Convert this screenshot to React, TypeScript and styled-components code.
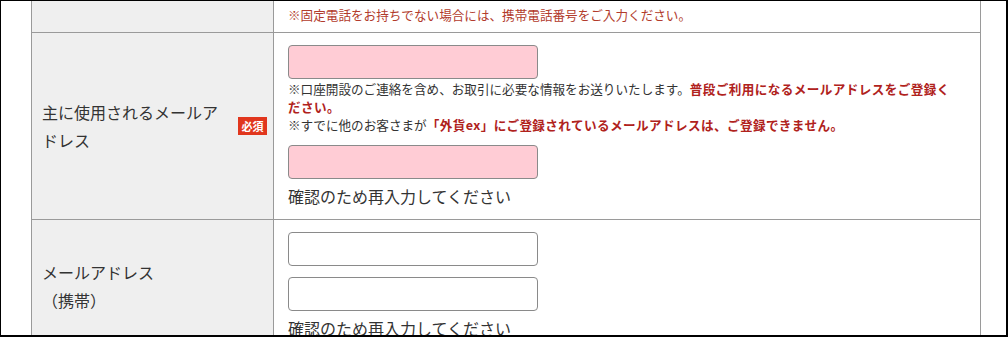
import React from 'react';
import styled, { createGlobalStyle } from 'styled-components';

const GlobalStyle = createGlobalStyle`
  html, body {
    margin: 0;
    padding: 0;
    background: #fff;
  }
  body {
    font-family: "Noto Sans CJK JP", "Noto Sans", sans-serif;
    color: #333;
  }
`;

const Frame = styled.div`
  width: 1008px;
  height: 337px;
  box-sizing: border-box;
  border-style: solid;
  border-color: #000;
  border-width: 1px 2px 2px 1px;
  padding-left: 30px;
  overflow: hidden;
  background: #fff;
`;

const Table = styled.div`
  width: 950px;
  box-sizing: border-box;
  border-left: 1px solid #9a9a9a;
  border-right: 1px solid #9a9a9a;
`;

const Row = styled.div`
  display: grid;
  grid-template-columns: 242px 1fr;
  border-bottom: 1px solid #9a9a9a;
`;

const Label = styled.div`
  display: flex;
  align-items: center;
  gap: 8px;
  box-sizing: border-box;
  padding: 0 6px 0 10px;
  background: #efefef;
  border-right: 1px solid #9a9a9a;
  font-size: 16px;
  line-height: 28px;
  color: #333;
`;

const LabelText = styled.div`
  flex: 1;
  min-width: 0;
`;

const Required = styled.span`
  flex: none;
  width: 29px;
  height: 18px;
  display: flex;
  align-items: center;
  justify-content: center;
  background: #e1361d;
  color: #fff;
  font-size: 11px;
  font-weight: 700;
  line-height: 1;
`;

const Value = styled.div<{ $pad?: string }>`
  display: flex;
  flex-direction: column;
  align-items: flex-start;
  box-sizing: border-box;
  padding: ${(p) => p.$pad || '12px 26px 12px 14px'};
`;

const Field = styled.input<{ $required?: boolean; $gap?: number }>`
  width: 250px;
  height: 34px;
  box-sizing: border-box;
  margin: ${(p) => p.$gap || 0}px 0 0;
  border: 1px solid #8a8a8a;
  border-radius: 4px;
  background: ${(p) => (p.$required ? '#ffccd5' : '#fff')};
  outline: none;
`;

const Note = styled.p<{ $tone?: 'red' | 'plain' }>`
  margin: 1px 0 0;
  font-size: 12.6px;
  line-height: 18px;
  color: ${(p) => (p.$tone === 'red' ? '#b23b2c' : '#333')};
`;

const Strong = styled.strong`
  color: #b0221c;
  font-weight: 700;
  letter-spacing: 0.4px;
`;

const Confirm = styled.div`
  margin-top: 6px;
  font-size: 16px;
  line-height: 22px;
  color: #333;
`;

export default function App() {
  return (
    <>
      <GlobalStyle />
      <Frame>
        <Table>
          <Row>
            <Label />
            <Value $pad="5px 26px 8px 14px">
              <Note $tone="red" style={{ margin: 0 }}>
                ※固定電話をお持ちでない場合には、携帯電話番号をご入力ください。
              </Note>
            </Value>
          </Row>
          <Row>
            <Label>
              <LabelText>主に使用されるメールアドレス</LabelText>
              <Required>必須</Required>
            </Label>
            <Value>
              <Field $required type="text" />
              <Note>
                ※口座開設のご連絡を含め、お取引に必要な情報をお送りいたします。
                <Strong>普段ご利用になるメールアドレスをご登録ください。</Strong>
                <br />
                ※すでに他のお客さまが
                <Strong>「外貨ex」にご登録されているメールアドレスは、ご登録できません。</Strong>
              </Note>
              <Field $required $gap={11} type="text" />
              <Confirm>確認のため再入力してください</Confirm>
            </Value>
          </Row>
          <Row>
            <Label>
              <LabelText>
                メールアドレス
                <br />
                （携帯）
              </LabelText>
            </Label>
            <Value>
              <Field type="text" />
              <Field $gap={11} type="text" />
              <Confirm>確認のため再入力してください</Confirm>
            </Value>
          </Row>
        </Table>
      </Frame>
    </>
  );
}
